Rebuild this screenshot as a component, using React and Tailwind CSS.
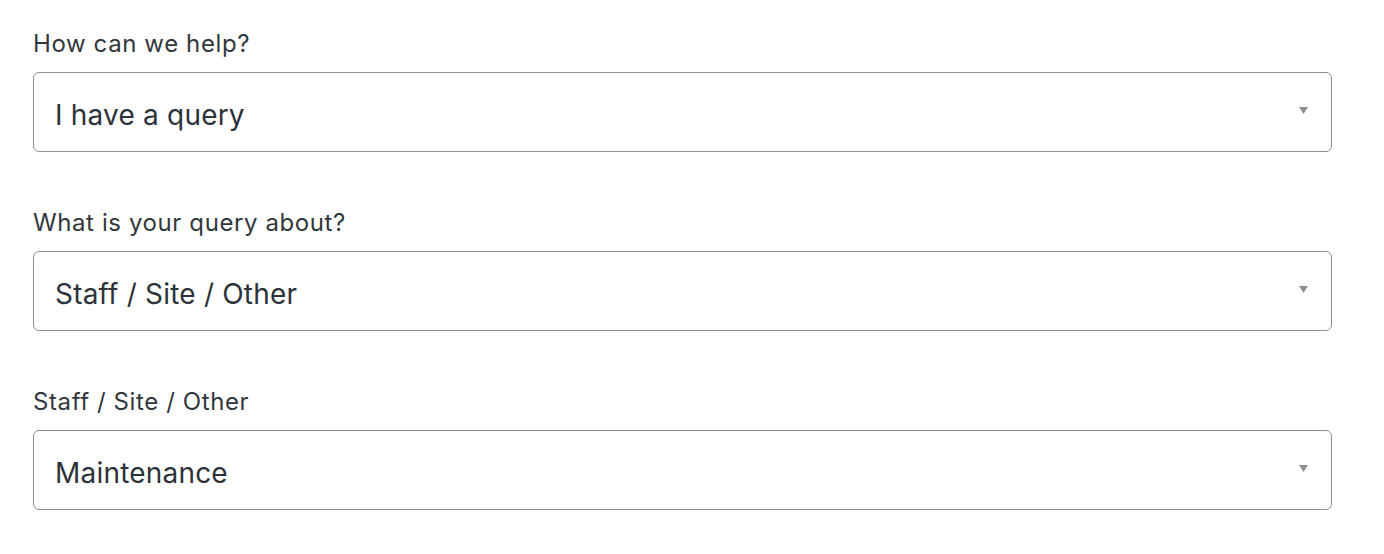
const fields = [
  { label: "How can we help?", value: "I have a query" },
  { label: "What is your query about?", value: "Staff / Site / Other" },
  { label: "Staff / Site / Other", value: "Maintenance" },
];

function SelectBox({ value }) {
  return (
    <div className="flex h-[80px] w-[1299px] items-center justify-between rounded-[6px] border border-[#8c8f94] bg-white pl-[21px] pr-[23px]">
      <span className="pt-[5px] text-[28px] tracking-[0.2px] text-[#2c3338]">{value}</span>
      {/* tiny dropdown arrow */}
      <svg width="9" height="7" viewBox="0 0 9 7" className="mb-[3px]">
        <path d="M0 0 H9 L4.5 7 Z" fill="#8c8f94" />
      </svg>
    </div>
  );
}

export default function App() {
  return (
    <div className="min-h-screen w-full bg-white pl-[33px] pt-[28px] font-['Inter','Liberation_Sans',sans-serif]">
      {fields.map((f, i) => (
        <div key={i} className={i > 0 ? "mt-[55px]" : ""}>
          <div className="mb-[12px] flex h-[32px] items-center text-[24px] tracking-[0.6px] text-[#32373c]">
            {f.label}
          </div>
          <SelectBox value={f.value} />
        </div>
      ))}
    </div>
  );
}
